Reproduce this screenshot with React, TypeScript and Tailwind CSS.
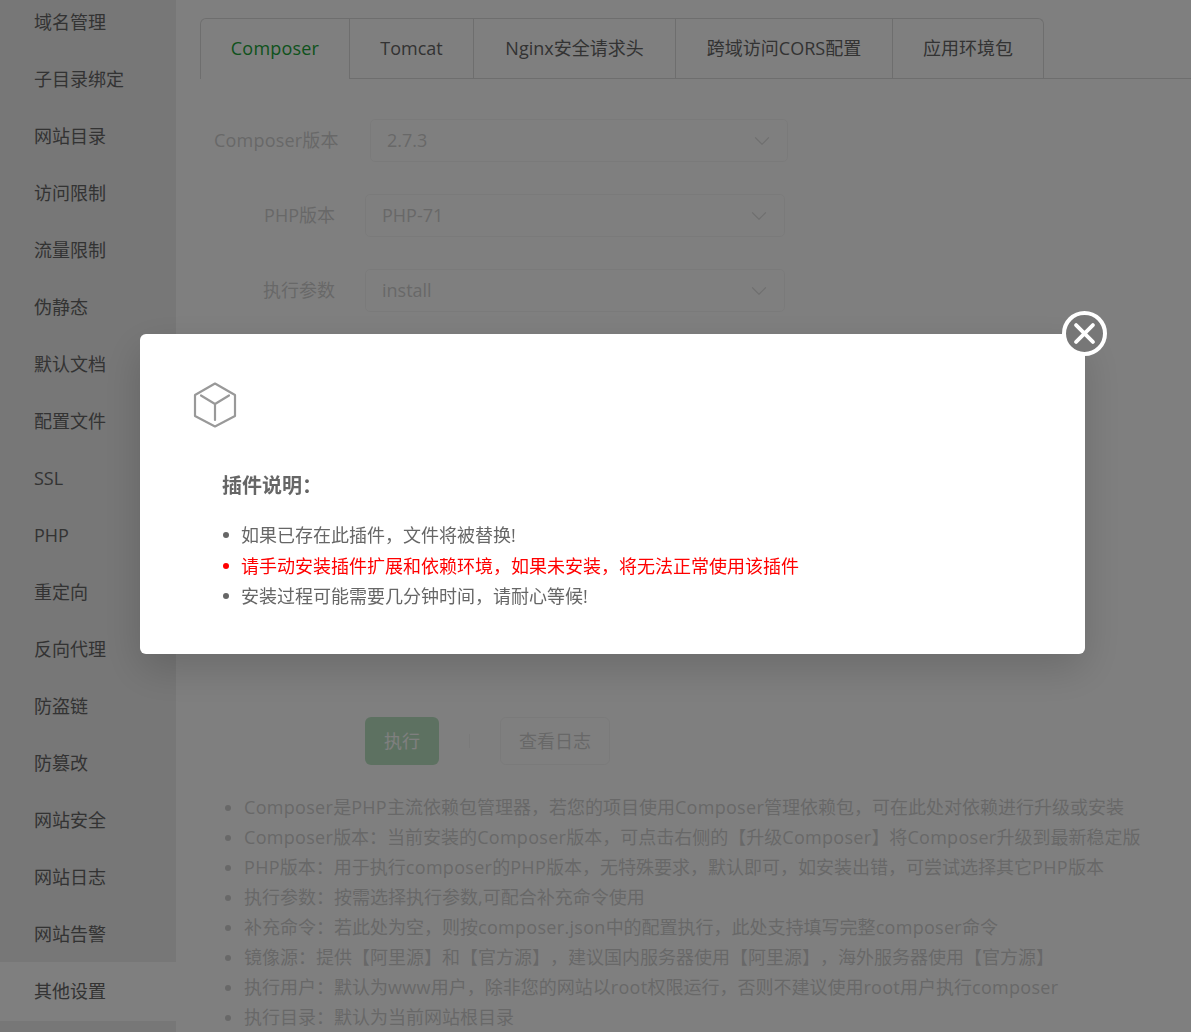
import { ChevronDown } from "lucide-react";

const menuItems = [
  "域名管理", "子目录绑定", "网站目录", "访问限制", "流量限制", "伪静态", "默认文档", "配置文件", "SSL",
  "PHP", "重定向", "反向代理", "防盗链", "防篡改", "网站安全", "网站日志", "网站告警", "其他设置", "",
];

const tabs = [
  { label: "Composer", width: "w-[150px]" },
  { label: "Tomcat", width: "w-[124px]" },
  { label: "Nginx安全请求头", width: "w-[202px]" },
  { label: "跨域访问CORS配置", width: "w-[217px]" },
  { label: "应用环境包", width: "w-[151px]" },
];

const formRows = [
  { label: "PHP版本", value: "PHP-71" },
  { label: "执行参数", value: "install" },
];

// full-width punctuation, as in the original copy
const C = "\uFF0C";
const P = "\uFF1A";

const helpLines = [
  `Composer是PHP主流依赖包管理器${C}若您的项目使用Composer管理依赖包${C}可在此处对依赖进行升级或安装`,
  `Composer版本${P}当前安装的Composer版本${C}可点击右侧的【升级Composer】将Composer升级到最新稳定版`,
  `PHP版本${P}用于执行composer的PHP版本${C}无特殊要求${C}默认即可${C}如安装出错${C}可尝试选择其它PHP版本`,
  `执行参数${P}按需选择执行参数,可配合补充命令使用`,
  `补充命令${P}若此处为空${C}则按composer.json中的配置执行${C}此处支持填写完整composer命令`,
  `镜像源${P}提供【阿里源】和【官方源】${C}建议国内服务器使用【阿里源】${C}海外服务器使用【官方源】`,
  `执行用户${P}默认为www用户${C}除非您的网站以root权限运行${C}否则不建议使用root用户执行composer`,
  `执行目录${P}默认为当前网站根目录`,
];

// latin runs sit a little wider than the fallback font sets them
const HelpLine = ({ text }: { text: string }) => (
  <li className="whitespace-nowrap">
    {text.split(/([A-Za-z.]+)/).map((part, i) =>
      i % 2 === 1 ? <span key={i} className="tracking-[0.3px]">{part}</span> : part
    )}
  </li>
);

const Select = ({ value, className }: { value: string; className: string }) => (
  <div className={`flex h-[43px] items-center justify-between rounded-[5px] border border-[#e0e0e0] pl-[16px] pr-[12px] ${className}`}>
    <span>{value}</span>
    <ChevronDown className="h-[26px] w-[26px] text-[#999]" strokeWidth={1.1} />
  </div>
);

const PluginNotice = () => (
  <div className="fixed inset-0 bg-black/50">
    <div className="absolute left-[140px] top-[334px] h-[320px] w-[945px] rounded-md bg-white pl-[53px] pt-[48px] text-[#666] shadow-[0_15px_40px_rgba(0,0,0,0.16)]">
      <svg viewBox="0 0 44 46" className="h-[46px] w-[44px]" fill="none" stroke="#999" strokeWidth="2.2" strokeLinejoin="round" strokeLinecap="round">
        <path d="M22 1.5 42 13v21L22 44.5 2 34V13z" />
        <path d="M8 13.5 22 22l14-8.5M22 22v16" />
      </svg>
      <div className="ml-[29px] mt-[43px]">
        <h3 className="text-[20px] font-bold leading-[30px]">{`插件说明${P}`}</h3>
        <ul className="mt-[19px] text-[18px] leading-[30.5px]">
          <li className="flex items-center">
            <span className="ml-[1px] mr-[12px] h-[6px] w-[6px] rounded-full bg-[#666]" />
            {`如果已存在此插件${C}文件将被替换!`}
          </li>
          <li className="flex items-center text-[#ff0000]">
            <span className="ml-[1px] mr-[12px] h-[6px] w-[6px] rounded-full bg-[#ff0000]" />
            {`请手动安装插件扩展和依赖环境${C}如果未安装${C}将无法正常使用该插件`}
          </li>
          <li className="flex items-center">
            <span className="ml-[1px] mr-[12px] h-[6px] w-[6px] rounded-full bg-[#666]" />
            {`安装过程可能需要几分钟时间${C}请耐心等候!`}
          </li>
        </ul>
      </div>
      <button className="absolute -right-[22px] -top-[23px] flex h-[45px] w-[45px] items-center justify-center rounded-full border-[4px] border-white bg-[#777]">
        <svg viewBox="0 0 20 20" className="h-[21px] w-[21px]" stroke="white" strokeWidth="3.6" strokeLinecap="round">
          <path d="M2 2l16 16M18 2 2 18" />
        </svg>
      </button>
    </div>
  </div>
);

export default function App() {
  return (
    <div className="flex h-[1032px] overflow-hidden bg-white font-['Open_Sans','Noto_Sans_CJK_SC',sans-serif] text-[18px] text-[#666] [text-spacing-trim:space-all]">
      <aside className="-mt-[6px] w-[176px] shrink-0 bg-[#eeeeee]">
        {menuItems.map((item) => (
          <div
            key={item}
            className={`flex items-center pl-[34px] ${item === "其他设置" ? "-my-px h-[59px] bg-white" : "h-[57px]"}`}
          >
            {item}
          </div>
        ))}
      </aside>

      <main className="min-w-0 flex-1 pt-[18px]">
        <div className="ml-[24px] flex h-[61px] border-b border-[#ddd]">
          {tabs.map((tab, i) => (
            <div
              key={tab.label}
              className={`flex h-[61px] shrink-0 items-center justify-center border-r border-t border-[#ddd] pb-[2px] ${tab.width} ${
                i === 0 ? "rounded-tl-md border-l bg-white tracking-[0.2px] text-[#20a53a]" : ""
              } ${i === tabs.length - 1 ? "rounded-tr-md" : ""}`}
            >
              {tab.label}
            </div>
          ))}
        </div>

        <div className="opacity-30">
          <div className="ml-[38px] mt-[40px] flex items-center">
            <span className="w-[125px] tracking-[0.2px]">Composer版本</span>
            <Select value="2.7.3" className="ml-[31px] w-[418px]" />
          </div>
          {formRows.map((row) => (
            <div key={row.label} className="mt-[32px] flex items-center">
              <span className="w-[159px] text-right">{row.label}</span>
              <Select value={row.value} className="ml-[30px] w-[420px]" />
            </div>
          ))}

          <div className="ml-[189px] mt-[405px] flex items-center">
            <button className="h-[48px] w-[74px] rounded-md bg-[#20a53a] text-white">执行</button>
            <span className="ml-[30px] h-[14px] w-px bg-[#e0e0e0]" />
            <button className="ml-[30px] h-[48px] w-[110px] rounded-md border border-[#e0e0e0]">查看日志</button>
          </div>

          <ul className="ml-[48px] mt-[27px] list-disc pl-[20px] leading-[30px] marker:text-[#666]">
            {helpLines.map((line) => (
              <HelpLine key={line} text={line} />
            ))}
          </ul>
        </div>
      </main>

      <PluginNotice />
    </div>
  );
}
